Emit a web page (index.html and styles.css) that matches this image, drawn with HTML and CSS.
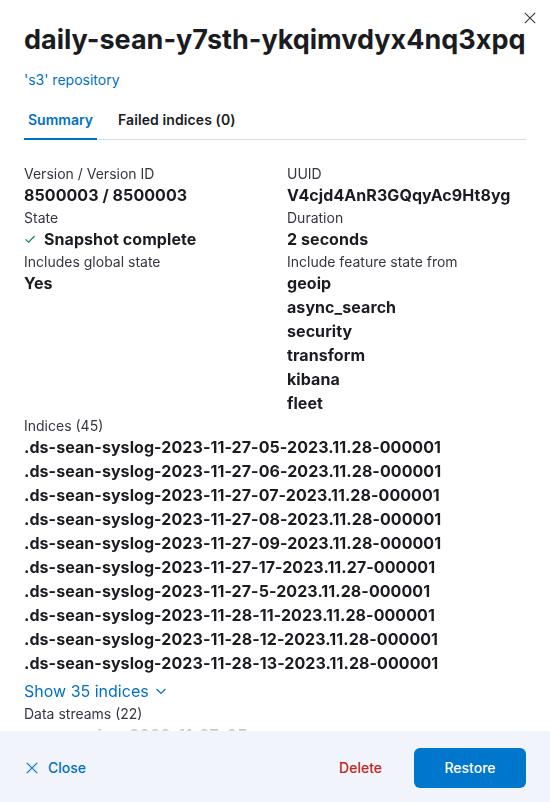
FILE: index.html
```html
<!DOCTYPE html>
<html lang="en">
<head>
<meta charset="utf-8">
<title>Snapshot details</title>
<link rel="stylesheet" href="styles.css">
</head>
<body>
<div class="flyout">
  <button class="close-x" aria-label="Close this dialog">
    <svg width="12" height="12" viewBox="0 0 12 12"><path d="M0.8 0.8 L11.2 11.2 M11.2 0.8 L0.8 11.2" stroke="#343741" stroke-width="1.1" fill="none"/></svg>
  </button>
  <header class="head">
    <h1 class="title">daily-sean-y7sth-ykqimvdyx4nq3xpq</h1>
    <a class="repo-link" href="#">'s3' repository</a>
    <nav class="tabs">
      <span class="tab tab-active">Summary</span>
      <span class="tab">Failed indices (0)</span>
    </nav>
  </header>
  <main class="body">
    <div class="cols">
      <dl class="col">
        <dt class="lbl">Version / Version ID</dt>
        <dd class="val">8500003 / 8500003</dd>
        <dt class="lbl">State</dt>
        <dd class="val state">
          <svg class="check" width="12" height="12" viewBox="0 0 12 12"><path d="M1.5 6.4 L4.6 9.2 L10.6 3" stroke="#017d73" stroke-width="1.1" fill="none"/></svg>
          Snapshot complete
        </dd>
        <dt class="lbl">Includes global state</dt>
        <dd class="val">Yes</dd>
      </dl>
      <dl class="col">
        <dt class="lbl">UUID</dt>
        <dd class="val">V4cjd4AnR3GQqyAc9Ht8yg</dd>
        <dt class="lbl">Duration</dt>
        <dd class="val">2 seconds</dd>
        <dt class="lbl">Include feature state from</dt>
        <dd class="val">geoip</dd>
        <dd class="val">async_search</dd>
        <dd class="val">security</dd>
        <dd class="val">transform</dd>
        <dd class="val">kibana</dd>
        <dd class="val">fleet</dd>
      </dl>
    </div>
    <dl class="full">
      <dt class="lbl">Indices (45)</dt>
      <dd class="val">.ds-sean-syslog-2023-11-27-05-2023.11.28-000001</dd>
      <dd class="val">.ds-sean-syslog-2023-11-27-06-2023.11.28-000001</dd>
      <dd class="val">.ds-sean-syslog-2023-11-27-07-2023.11.28-000001</dd>
      <dd class="val">.ds-sean-syslog-2023-11-27-08-2023.11.28-000001</dd>
      <dd class="val">.ds-sean-syslog-2023-11-27-09-2023.11.28-000001</dd>
      <dd class="val">.ds-sean-syslog-2023-11-27-17-2023.11.27-000001</dd>
      <dd class="val">.ds-sean-syslog-2023-11-27-5-2023.11.28-000001</dd>
      <dd class="val">.ds-sean-syslog-2023-11-28-11-2023.11.28-000001</dd>
      <dd class="val">.ds-sean-syslog-2023-11-28-12-2023.11.28-000001</dd>
      <dd class="val">.ds-sean-syslog-2023-11-28-13-2023.11.28-000001</dd>
      <dd class="more">
        <a class="more-link" href="#">Show 35 indices
          <svg class="chev" width="12" height="12" viewBox="0 0 12 12"><path d="M1.5 4 L6 8.5 L10.5 4" stroke="#0071c2" stroke-width="1.2" fill="none"/></svg>
        </a>
      </dd>
      <dt class="lbl">Data streams (22)</dt>
      <dd class="val">sean-syslog-2023-11-27-05</dd>
      <dd class="val">sean-syslog-2023-11-27-06</dd>
    </dl>
  </main>
  <footer class="foot">
    <button class="btn-empty btn-close">
      <svg width="12" height="12" viewBox="0 0 12 12"><path d="M0.8 0.8 L11.2 11.2 M11.2 0.8 L0.8 11.2" stroke="#0071c2" stroke-width="1.1" fill="none"/></svg>
      <span>Close</span>
    </button>
    <div class="actions">
      <button class="btn-empty btn-delete">Delete</button>
      <button class="btn-primary">Restore</button>
    </div>
  </footer>
</div>
</body>
</html>
```

FILE: styles.css
```css
* { box-sizing: border-box; }
html, body { margin: 0; padding: 0; }
body {
  font-family: Inter, "Noto Sans", "Liberation Sans", sans-serif;
  color: #343741;
  background: #fff;
}
.flyout {
  position: relative;
  width: 550px;
  height: 802px;
  display: flex;
  flex-direction: column;
  background: #fff;
  overflow: hidden;
}
.close-x {
  position: absolute;
  top: 6px;
  right: 8px;
  width: 24px;
  height: 24px;
  border: 0;
  background: none;
  padding: 0;
  display: flex;
  align-items: center;
  justify-content: center;
}
.head {
  padding: 24px 24px 0;
}
.title {
  margin: 0;
  font-size: 27px;
  line-height: 32px;
  font-weight: 700;
  color: #1a1c21;
  white-space: nowrap;
}
.repo-link {
  display: block;
  margin-top: 14px;
  font-size: 14px;
  line-height: 20px;
  color: #0071c2;
  text-decoration: none;
}
.tabs {
  display: flex;
  gap: 17px;
  margin-top: 10px;
  height: 40px;
  border-bottom: 1px solid #d3dae6;
}
.tab {
  display: flex;
  align-items: center;
  padding: 0 4px;
  font-size: 14px;
  font-weight: 600;
  color: #1a1c21;
  margin-bottom: -1px;
  border-bottom: 2px solid transparent;
  letter-spacing: 0.1px;
}
.tab-active {
  color: #0071c2;
  border-bottom-color: #0071c2;
  letter-spacing: 0;
}
.body {
  flex: 1;
  min-height: 0;
  overflow: hidden;
  padding: 24px 24px 0;
  -webkit-mask-image: linear-gradient(to bottom, #000 0, #000 calc(100% - 8px), rgba(0,0,0,0.1) 100%);
  mask-image: linear-gradient(to bottom, #000 0, #000 calc(100% - 8px), rgba(0,0,0,0.1) 100%);
}
dl, dd, dt { margin: 0; }
.cols {
  display: grid;
  grid-template-columns: 1fr 1fr;
  column-gap: 24px;
}
.lbl {
  font-size: 14px;
  line-height: 20px;
  font-weight: 400;
  color: #343741;
}
.val {
  font-size: 16px;
  line-height: 22px;
  padding-bottom: 2px;
  font-weight: 700;
  color: #1a1c21;
  white-space: nowrap;
  letter-spacing: 0.07px;
}
.state {
  display: flex;
  align-items: center;
  gap: 8px;
}
.check { flex: none; }
.more {
  padding: 3px 0 1px;
}
.more-link {
  display: inline-flex;
  align-items: center;
  gap: 6px;
  font-size: 16px;
  line-height: 24px;
  color: #0071c2;
  text-decoration: none;
}
.foot {
  flex: none;
  height: 71px;
  background: #f1f4fa;
  padding: 2px 24px 0;
  display: flex;
  align-items: center;
  justify-content: space-between;
}
.btn-empty {
  border: 0;
  background: none;
  font-family: inherit;
  font-size: 14px;
  font-weight: 500;
  display: inline-flex;
  align-items: center;
  height: 40px;
  padding: 0 8px;
}
.btn-close {
  color: #0071c2;
  gap: 10px;
  margin-left: -6px;
}
.actions {
  display: flex;
  align-items: center;
  gap: 24px;
}
.btn-delete {
  color: #bd271e;
}
.btn-primary {
  border: 0;
  width: 112px;
  height: 40px;
  border-radius: 6px;
  background: #0077cc;
  color: #fff;
  font-family: inherit;
  font-size: 14px;
  font-weight: 500;
}
```
